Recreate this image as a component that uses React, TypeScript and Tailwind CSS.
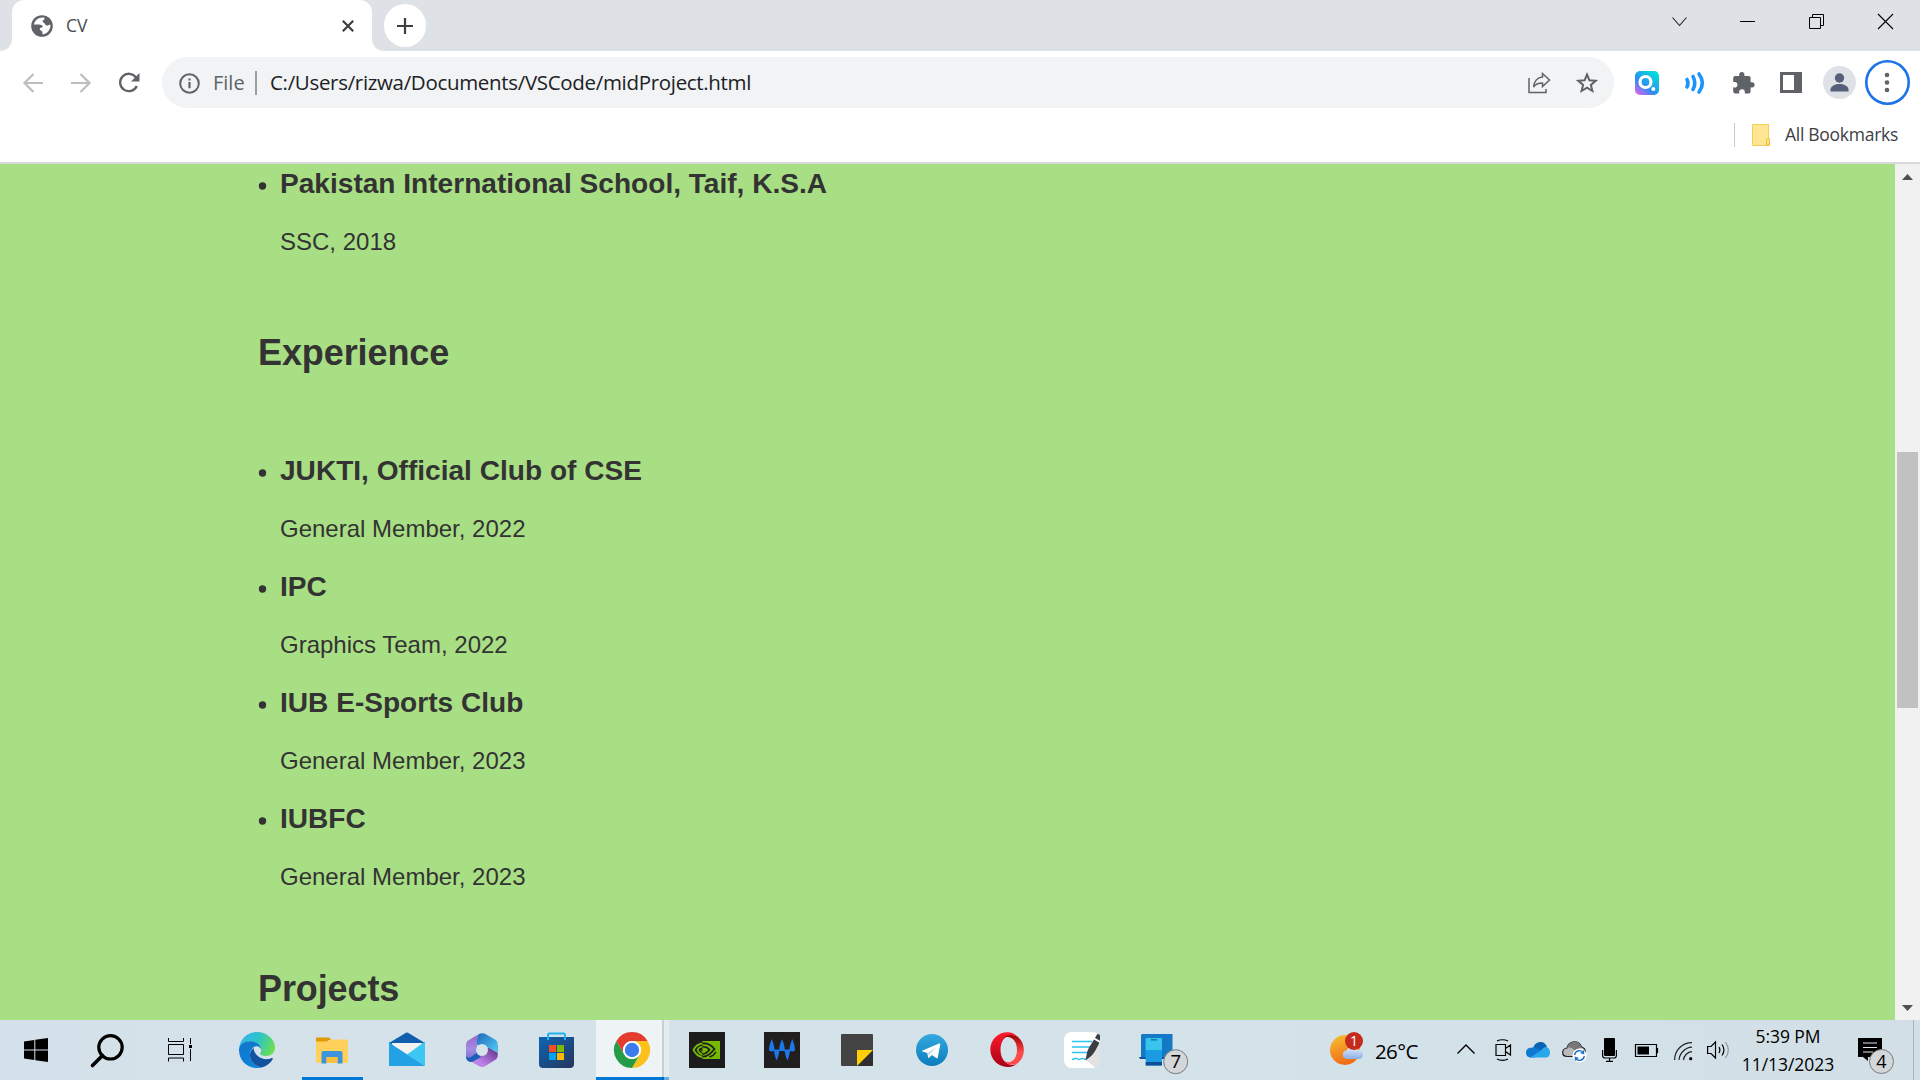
import type { ReactNode } from "react";

const UI = "font-['Open_Sans','Noto_Sans',sans-serif]";

function Svg({ w, h, className = "", children }: { w: number; h: number; className?: string; children: ReactNode }) {
  return (
    <svg width={w} height={h} viewBox={`0 0 ${w} ${h}`} fill="none" className={`block shrink-0 overflow-visible ${className}`}>
      {children}
    </svg>
  );
}

/* ---------- Browser chrome ---------- */

function TabStrip() {
  return (
    <div className="flex h-[51px] shrink-0 bg-[#dee1e6]">
      <Svg w={12} h={51}>
        <path d="M12 39v12H0C7 51 12 46 12 39z" fill="#fff" />
      </Svg>
      <div className="flex h-[51px] w-[360px] items-center rounded-t-[12px] bg-white pl-[19px]">
        <Svg w={22} h={22}>
          <circle cx="11" cy="11" r="10.8" fill="#5f6368" />
          <path d="M13.500 2.800c.2 1.300-.5 2.300-1.500 2.700-.9.400-.3 1.600.6 2 1.500.7 1.300 2.500 2.900 2.900 1.400.3 2.200-.9 4-.7.100 5-3.300 9-8 9.800-.3-1 .3-2-.3-3-.6-.9-2-.8-2.400-2-.3-1.200.9-1.800 2-2 1-.3 1.300-1.400.4-2.100-1.400-1-3.200-.9-4.700-.9-1.500 0-2.800-.2-3.600.3C3.500 5.500 8 1.700 13.500 2.800z" fill="#fff" />
        </Svg>
        <span className={`${UI} -mt-0.5 ml-[13px] w-[276px] text-[17.5px] leading-[24px] text-[#4a4d51]`}>CV</span>
        <Svg w={12} h={12}>
          <path d="M.8.8l10.400 10.400M11.200.8L.8 11.200" stroke="#3c4043" strokeWidth="2.200" />
        </Svg>
      </div>
      <Svg w={12} h={51}>
        <path d="M0 39v12h12C5 51 0 46 0 39z" fill="#fff" />
      </Svg>
      <div className="mt-1 flex h-[43px] w-[42px] items-center justify-center rounded-full bg-white">
        <Svg w={16} h={16}>
          <path d="M8 0v16M0 8h16" stroke="#3c4043" strokeWidth="2.200" />
        </Svg>
      </div>
      <div className="ml-auto flex items-start">
        <Svg w={15} h={10} className="mt-[17px]">
          <path d="M.5.5l7 8 7-8" stroke="#222" strokeWidth="1.100" />
        </Svg>
        <Svg w={15} h={1} className="mt-[21px] ml-[53px]">
          <rect width="15" height="1" fill="#000" />
        </Svg>
        <Svg w={15} h={15} className="mt-[14px] ml-[54px]">
          <path d="M.5 3.500h11v11H.5zM3.500 3.500v-3h11v11h-3" stroke="#000" />
        </Svg>
        <Svg w={15} h={15} className="mt-[14px] mr-[27px] ml-[54px]">
          <path d="M0 0l15 15M15 0L0 15" stroke="#000" strokeWidth="1.100" />
        </Svg>
      </div>
    </div>
  );
}

function Toolbar() {
  return (
    <div className="mt-1.5 flex h-[51px] shrink-0 items-center">
      <Svg w={20} h={20} className="ml-[23px]">
        <path d="M20 10H1.500M10.500 1L1.500 10l9 9" stroke="#bcbec1" strokeWidth="2.200" />
      </Svg>
      <Svg w={20} h={20} className="ml-[28px]">
        <path d="M0 10h18.500M9.500 1l9 9-9 9" stroke="#bcbec1" strokeWidth="2.200" />
      </Svg>
      <Svg w={22} h={20} className="ml-[28px]">
        <path d="M17 4.500A8.700 8.700 0 1 0 17.800 13" stroke="#5f6368" strokeWidth="2.300" />
        <path d="M20.500 0v8.500H12z" fill="#5f6368" />
      </Svg>
      <div className="ml-[21px] flex h-[51px] w-[1452px] items-center rounded-full bg-[#f1f3f4]">
        <Svg w={21} h={21} className="mt-0.5 ml-[17px]">
          <circle cx="10.500" cy="10.500" r="9.300" stroke="#5f6368" strokeWidth="2" />
          <path d="M10.500 9v6.200M10.500 5.600v2" stroke="#5f6368" strokeWidth="2.200" />
        </Svg>
        <span className={`${UI} ml-[13px] w-[42px] text-[20px] leading-[28px] tracking-[0px] text-[#5f6368]`}>File</span>
        <div className="h-6 w-0.5 bg-[#9a9da1]" />
        <span className={`${UI} -mt-0.5 ml-[13px] text-[20.5px] leading-[28px] tracking-[-0.32px] whitespace-nowrap text-[#202124]`}>
          C:/Users/rizwa/Documents/VSCode/midProject.html
        </span>
        <Svg w={23} h={22} className="mr-[25px] ml-auto">
          <path d="M1 6v14.500h17V17" stroke="#5f6368" strokeWidth="1.500" />
          <path d="M14.500 1.500l7 6.500-7 6.500V11c-4 0-7 1-9 4 .5-5 3.500-9.500 9-10z" stroke="#5f6368" strokeWidth="1.500" />
        </Svg>
        <Svg w={22} h={22} className="mr-4">
          <path d="M11 2.500l2.400 5.800 6.300.5-4.800 4.100 1.500 6.100L11 15.700 5.600 19l1.500-6.100-4.800-4.100 6.300-.5z" stroke="#5f6368" strokeWidth="2" />
        </Svg>
      </div>
      <Svg w={24} h={24} className="ml-[21px]">
        <defs>
          <linearGradient id="ext" x1="0" y1="1" x2=".8" y2="0">
            <stop stopColor="#ff5fe8" />
            <stop offset=".42" stopColor="#2d8cf5" />
            <stop offset="1" stopColor="#00e0d8" />
          </linearGradient>
        </defs>
        <rect width="24" height="24" rx="5" fill="url(#ext)" />
        <circle cx="10.500" cy="11" r="5.500" stroke="#fff" strokeWidth="3.200" />
        <circle cx="18.300" cy="18" r="2" fill="#fff" />
      </Svg>
      <Svg w={20} h={22} className="ml-[26px]">
        <path d="M2 7.500c1.300 2.500 1.300 5 0 7.500M8 4.500c2.200 4 2.200 9 0 13M14 2c4.500 6 4.500 12 0 18" stroke="#1a95ff" strokeWidth="3.600" strokeLinecap="round" />
      </Svg>
      <Svg w={22} h={22} className="ml-[28px]">
        <path d="M19 10.200h-1.400V6a2 2 0 0 0-2-2h-4.200V2.600a2.600 2.600 0 0 0-5.200 0V4H2.200a2 2 0 0 0-2 2v4h1.400a2.800 2.800 0 0 1 0 5.600H.2v4a2 2 0 0 0 2 2h4v-1.500a2.800 2.800 0 0 1 5.600 0v1.500h3.800a2 2 0 0 0 2-2v-4.200H19a2.600 2.600 0 0 0 0-5.200z" fill="#5f6368" />
      </Svg>
      <Svg w={22} h={21} className="ml-[25px]">
        <path d="M0 0h22v21H0zM3 3v15h11V3z" fill="#5f6368" fillRule="evenodd" />
      </Svg>
      <Svg w={33} h={33} className="ml-[21px]">
        <circle cx="16.500" cy="16.500" r="16.500" fill="#dee1e6" />
        <circle cx="16.500" cy="12" r="4.700" fill="#55617a" />
        <path d="M7.500 25.500v-2c0-3.500 5-5.500 9-5.500s9 2 9 5.500v2z" fill="#55617a" />
      </Svg>
      <Svg w={45} h={45} className="ml-[9px]">
        <circle cx="22.500" cy="22.500" r="21.200" stroke="#1a73e8" strokeWidth="2.600" />
        <circle cx="22" cy="15" r="2.300" fill="#5f6368" />
        <circle cx="22" cy="22.500" r="2.300" fill="#5f6368" />
        <circle cx="22" cy="30" r="2.300" fill="#5f6368" />
      </Svg>
    </div>
  );
}

function BookmarksBar() {
  return (
    <div className="flex h-[56px] shrink-0 justify-end border-b-2 border-[#d9dadc] pt-[15px]">
      <div className="flex h-6 items-center">
        <div className="h-6 w-px bg-[#c8cacd]" />
        <Svg w={18} h={22} className="ml-[17px]">
          <path d="M.5.5h16v14h1v7H.5z" fill="#ffe694" stroke="#f5cf52" />
          <path d="M14.500 21v-5.500c0-1.500 3-1.500 3 0V21z" fill="#ffe08a" stroke="#eec13c" />
        </Svg>
        <span className={`${UI} -mt-0.5 ml-[15px] w-[135px] text-[17.5px] leading-[24px] tracking-[-0.28px] whitespace-nowrap text-[#3c4043]`}>
          All Bookmarks
        </span>
      </div>
    </div>
  );
}

/* ---------- Page ---------- */

function Entry({ title, detail }: { title: string; detail: string }) {
  return (
    <li className="mb-[27px] h-[89px]">
      <div className="flex h-8 items-center">
        <Svg w={22} h={8} className="mt-[5px]">
          <circle cx="4.500" cy="4" r="3.700" fill="#333" />
        </Svg>
        <h3 className="mt-0.5 text-[28.08px] leading-8 font-bold whitespace-nowrap">{title}</h3>
      </div>
      <p className="mt-[29px] ml-[22px] text-[24px] leading-7">{detail}</p>
    </li>
  );
}

const experience = [
  { title: "JUKTI, Official Club of CSE", detail: "General Member, 2022" },
  { title: "IPC", detail: "Graphics Team, 2022" },
  { title: "IUB E-Sports Club", detail: "General Member, 2023" },
  { title: "IUBFC", detail: "General Member, 2023" },
];

function Page() {
  return (
    <div className="flex h-[856px] shrink-0 overflow-hidden bg-[#a9df84]">
      <main className="flex-1 pt-[3px] pl-[258px] font-['Liberation_Sans',Arial,sans-serif] text-[#333]">
        <ul>
          <Entry title="Pakistan International School, Taif, K.S.A" detail="SSC, 2018" />
        </ul>
        <h2 className="mt-[77px] text-[36px] leading-10 font-bold tracking-[-0.1px]">Experience</h2>
        <ul className="mt-[81px]">
          {experience.map((e) => (
            <Entry key={e.title} {...e} />
          ))}
        </ul>
        <h2 className="mt-[78px] text-[36px] leading-10 font-bold tracking-[-0.1px]">Projects</h2>
      </main>
      <div className="flex w-[25px] flex-col items-center bg-[#f1f1f1]">
        <Svg w={11} h={6} className="mt-[10px]">
          <path d="M5.500 0L11 6H0z" fill="#505050" />
        </Svg>
        <div className="mt-[272px] h-[256px] w-[21px] bg-[#c1c1c1]" />
        <Svg w={11} h={6} className="mt-auto mb-[9px]">
          <path d="M5.500 6L11 0H0z" fill="#505050" />
        </Svg>
      </div>
    </div>
  );
}

/* ---------- Taskbar ---------- */

const Edge = () => (
  <Svg w={36} h={36}>
    <defs>
      <linearGradient id="e1" x1="0" y1=".3" x2="1" y2=".6">
        <stop stopColor="#35b5ea" />
        <stop offset=".5" stopColor="#2fc3c9" />
        <stop offset="1" stopColor="#6be04f" />
      </linearGradient>
      <linearGradient id="e2" x1="0" y1="0" x2=".6" y2="1">
        <stop stopColor="#1273c6" />
        <stop offset="1" stopColor="#0a86e0" />
      </linearGradient>
    </defs>
    <path d="M0 17C.8 7 8.500 0 18 0c10 0 18 7.500 18 15.500 0 5.500-4 8.500-8.800 8.500-4 0-6.200-1.200-6.200-2.200 0-.8 1.200-1.600 1.200-4 0-4.500-4.500-8.300-10.700-8.300C6.500 9.500 2 12 0 17z" fill="url(#e1)" />
    <path d="M0 17C1 12 6 9.300 11.500 9.300c6.500 0 10.700 4 10.700 8.500-.8-2.300-2.400-3.600-4.500-3.600-3.500 0-6.700 4-6.700 8.800 0 6.500 5.500 12.500 12.500 12.300C21 36 19.500 36 18 36 7.500 36 0 28 0 18z" fill="url(#e2)" />
    <path d="M14.500 16c-2 1.500-3.500 4-3.500 7 0 7 6 12.500 12.500 12.300 4.500-1.500 8.300-4.500 10.300-8.300.4-.8-.3-1.300-1-1-1.500.8-3.500 1.200-5.300 1.200-6.500 0-12-3.800-13-11.200z" fill="#10529f" />
  </Svg>
);

const Explorer = () => (
  <Svg w={36} h={36}>
    <path d="M2 5.500h13l2.500 2.800h-3L12 11H2z" fill="#dd9b00" />
    <path d="M2 9.500h12L17 7.500h16a1 1 0 0 1 1 1V29a2 2 0 0 1-2 2H4a2 2 0 0 1-2-2z" fill="#ffd05a" />
    <path d="M7.500 31.500V21a2 2 0 0 1 2-2h17a2 2 0 0 1 2 2v10.500h-5V25h-11v6.500z" fill="#3d94dc" />
    <path d="M12.500 25h11v5.500h-11z" fill="#f8bf3c" />
  </Svg>
);

const Mail = () => (
  <Svg w={36} h={36}>
    <path d="M0 11L17 .8a2 2 0 0 1 2 0L36 11v5H0z" fill="#0f5fae" />
    <path d="M3 11h30v10L18 24 3 21z" fill="#f4f3f4" />
    <path d="M36 9.500V34L18 22.500z" fill="#3cc8f2" />
    <path d="M0 9.500v24.500h36L4.500 13.500z" fill="#22a2e4" />
  </Svg>
);

const M365 = () => (
  <Svg w={36} h={36}>
    <defs>
      <linearGradient id="m1" x1="0" y1="0" x2="0" y2="1">
        <stop stopColor="#9a62c8" />
        <stop offset=".55" stopColor="#a48ce0" />
        <stop offset="1" stopColor="#7a6cd0" />
      </linearGradient>
      <linearGradient id="m2" x1="0" y1="0" x2="1" y2="1">
        <stop stopColor="#1f67bd" />
        <stop offset="1" stopColor="#54d0f7" />
      </linearGradient>
      <linearGradient id="m3" x1="1" y1="0" x2="0" y2="1">
        <stop offset=".1" stopColor="#663088" />
        <stop offset=".7" stopColor="#bd83ea" />
      </linearGradient>
    </defs>
    <path d="M15 2L5 8a5 5 0 0 0-3 4v12c0 3 2 5 4.500 5L13 25V9c0-3 .5-5 2-7z" fill="url(#m1)" />
    <path d="M23 16L33.700 13v10c0 2-.7 4-2.700 5l-9.500 6c-2 1.200-4.500 1.200-6.500 0L5 28.500l3-.5 15-9z" fill="url(#m3)" />
    <path d="M15 2c2-1 4.500-1 6.500 0L31 7.500c2 1 2.700 3 2.700 5V21L23 15l-10-2V9c0-3 .5-5 2-7z" fill="url(#m2)" />
    <path d="M2 24c1 1.500 3 2 5 1l6-4.500 4 4.500-8 4.500C5 31 2 28.500 2 24z" fill="#1c5fb9" />
    <circle cx="18" cy="18" r="6" fill="#d6e4ea" />
  </Svg>
);

const Store = () => (
  <Svg w={36} h={36}>
    <defs>
      <linearGradient id="s1" x1="0" y1="0" x2="1" y2="1">
        <stop stopColor="#0e66b4" />
        <stop offset="1" stopColor="#26345c" />
      </linearGradient>
    </defs>
    <path d="M1 5h34v27a4 4 0 0 1-4 4H4a4 4 0 0 1-4-4V5z" fill="url(#s1)" />
    <path d="M9 8V3a1.500 1.500 0 0 1 1.500-1.500h14A1.500 1.500 0 0 1 26 3v5" stroke="#1fb4f0" strokeWidth="2" />
    <path d="M10 13h7v7h-7z" fill="#f25022" />
    <path d="M18 13h7v7h-7z" fill="#7fba00" />
    <path d="M10 21h7v7h-7z" fill="#00a4ef" />
    <path d="M18 21h7v7h-7z" fill="#ffb900" />
  </Svg>
);

const Chrome = () => (
  <Svg w={36} h={36}>
    <path d="M2.400 9A18 18 0 0 1 33.600 9H18a9 9 0 0 0-7.800 13.500z" fill="#e33b2e" />
    <path d="M33.600 9A18 18 0 0 1 18 36l7.800-13.500A9 9 0 0 0 18 9z" fill="#fcc21b" />
    <path d="M18 36A18 18 0 0 1 2.400 9l7.800 13.500a9 9 0 0 0 15.600 0z" fill="#259b48" />
    <circle cx="18" cy="18" r="9" fill="#fff" />
    <circle cx="18" cy="18" r="7.200" fill="#3a7cec" />
  </Svg>
);

const Nvidia = () => (
  <Svg w={36} h={36}>
    <path d="M0 0h36v36H0z" fill="#1c1c1c" />
    <path d="M13.500 9H31v18H13.500z" fill="#76b900" />
    <path d="M13.500 11.500C9 12 6 15 4.500 18c2 4 5 6.500 9 7" stroke="#76b900" strokeWidth="1.800" />
    <path d="M13.500 14.500c-3 .3-4.500 2-5 3.500 1 2.500 2.500 4 5 4.500" stroke="#76b900" strokeWidth="1.600" />
    <path d="M13.500 11.500c6-.5 9.500 2.500 12 5.500-3.500 4.500-7 8-12 7.500M13.500 14.800c4-.3 6 1.500 7 3-2 2.500-4 4.300-7 4.300" stroke="#1c1c1c" strokeWidth="1.700" />
    <path d="M27 20l-3 3.500-3.500 1.500" stroke="#1c1c1c" strokeWidth="1.500" />
    <path d="M13.500 17c1.500 0 2 .5 2.500 1.200-.7 1-1.500 1.700-2.500 1.700-1-.3-1.500-.8-1.800-1.500" stroke="#76b900" strokeWidth="1" />
  </Svg>
);

const Wave = () => (
  <Svg w={36} h={36}>
    <path d="M0 0h36v36H0z" fill="#201e1e" />
    <path
      d="M7.700 7c1.500 3.500 2.600 7 2.800 10.500h4.700C15.400 14 16.500 10.500 18 7c1.500 3.500 2.600 7 2.800 10.500h4.700c.2-3.500 1.300-7 2.800-10.500 1.500 3.500 2.600 7 2.700 11.500-1.500 1.200-3.500 1.200-5 .5-.5 3.500-1.300 6.500-2.600 9.500-1.400-3-2.300-6-2.700-9.500h-5.400c-.4 3.500-1.300 6.500-2.700 9.500-1.300-3-2.100-6-2.600-9.500-1.500.7-3.500.7-5-.5C5 14 6.200 10.500 7.700 7z"
      fill="#1c78ea"
    />
  </Svg>
);

const Sticky = () => (
  <Svg w={36} h={36}>
    <path d="M3 2h30a1 1 0 0 1 1 1v30a1 1 0 0 1-1 1H3a1 1 0 0 1-1-1V3a1 1 0 0 1 1-1z" fill="#434343" />
    <path d="M34 18L18 34h15a1 1 0 0 0 1-1z" fill="#2f2f2f" />
    <path d="M18 18h16L18 34z" fill="#ffd000" />
  </Svg>
);

const Telegram = () => (
  <Svg w={36} h={36}>
    <defs>
      <linearGradient id="t1" x1="0" y1="0" x2="0" y2="1">
        <stop stopColor="#34a9de" />
        <stop offset="1" stopColor="#0b7dbd" />
      </linearGradient>
    </defs>
    <circle cx="18" cy="18" r="16" fill="url(#t1)" />
    <path d="M8.500 18.500L25 11.500c.9-.3 1.400.1 1.200 1L23.800 25.500c-.2.900-.8 1.100-1.600.6L18 23l-2.600 2.600c-.8.700-1.300.4-1.400-.5L13.300 21l-4.700-1.400c-.8-.3-.8-.8-.1-1.100z" fill="#fff" />
    <path d="M14 21l8.500-6.200-6.800 7.200-.4 3z" fill="#b9d6e8" />
  </Svg>
);

const Opera = () => (
  <Svg w={36} h={36} className="ml-0.5">
    <defs>
      <linearGradient id="o1" x1="0" y1="0" x2="0" y2="1">
        <stop stopColor="#ff1b2d" />
        <stop offset="1" stopColor="#a70014" />
      </linearGradient>
      <linearGradient id="o2" x1="0" y1="0" x2="0" y2="1">
        <stop stopColor="#9c0000" />
        <stop offset=".6" stopColor="#ff4b4b" />
      </linearGradient>
    </defs>
    <path d="M17.500.3C8 .3.300 8 .300 17.600S8 35 17.500 35C22 35 25 33.500 28 31c-2 1.500-4 2-6 2-7-1-11.500-7-11.500-15.300S15 3.500 21 3c3 0 5 1 7 2C25 2 22 .3 17.500.3z" fill="url(#o1)" />
    <path d="M12.500 6.500C15 4 18 2.500 21.500 3c2.500 0 4.800 1 6.500 2a17.300 17.300 0 0 1 0 26c-5 3-11 2-15-3 7 5.500 14 0 14-10.300S19.500 2 12.500 6.500z" fill="url(#o2)" />
  </Svg>
);

const Notes = () => (
  <Svg w={36} h={36}>
    <rect width="36" height="36" rx="7.500" fill="#fff" />
    <path d="M22 28l13-17 1 2v16a7 7 0 0 1-5 6.500z" fill="#e2e2e2" />
    <path d="M8 9.500h20M8 15h18M8 20.500h16" stroke="#2cc3ee" strokeWidth="1.500" />
    <path d="M8 27.500c2 0 3-2 4.500-1s2.500 1.500 4 .5 2.500-.5 5.500.5" stroke="#2cc3ee" strokeWidth="1.500" />
    <path d="M21.500 28.500l1.500-8c.5-2 1.500-4 3-6.500l4-6.500 5.500 3.200-4 7.500c-1.200 2.200-2.500 4-4 5.500z" fill="#3c3e42" />
    <path d="M31 6l1.800-3.300c1-1.300 3.200-.3 3.200 1.300v4.800z" fill="#3c3e42" />
  </Svg>
);

const Phone = () => (
  <Svg w={36} h={36}>
    <path d="M3 2h30.500v23H2V3z" fill="#147ac8" />
    <path d="M0 25h26v2H1z" fill="#0b529c" />
    <rect x="6.700" y="6" width="16.300" height="27.500" rx="1" fill="#1a9be2" />
    <path d="M6.700 7a1 1 0 0 1 1-1H22a1 1 0 0 1 1 1v11H6.700z" fill="#39c4ee" />
    <path d="M6.700 30h16.300v3.500H6.700z" fill="#0d4f96" />
    <path d="M12 7.800h6" stroke="#1577b5" strokeWidth="1.500" />
    <circle cx="36.700" cy="29.700" r="12" fill="#d3d7da" stroke="#777b7e" />
    <text x="36.700" y="36.300" textAnchor="middle" fontSize="18.500" fill="#000" fontFamily="Open Sans">7</text>
  </Svg>
);

function Slot({ children }: { children: ReactNode }) {
  return <div className="flex h-[60px] w-[75px] shrink-0 items-center justify-center">{children}</div>;
}

function Tray() {
  return (
    <div className="flex h-[60px] items-start">
      <Svg w={33} h={33} className="mt-3">
        <defs>
          <linearGradient id="w1" x1=".2" y1="0" x2=".5" y2="1">
            <stop stopColor="#f5bd33" />
            <stop offset="1" stopColor="#f06a13" />
          </linearGradient>
          <linearGradient id="w2" x1="0" y1="0" x2="0" y2="1">
            <stop stopColor="#e3edfb" />
            <stop offset="1" stopColor="#8aaee6" />
          </linearGradient>
        </defs>
        <circle cx="15" cy="18" r="15" fill="url(#w1)" />
        <path d="M16.500 27a4.300 4.300 0 0 1 0-8.500 6.500 6.500 0 0 1 11-1c3 0 5.500 2 5.500 5s-2 4.500-4.500 4.500z" fill="url(#w2)" />
        <circle cx="24" cy="9" r="9" fill="#c42b1c" />
        <text x="24" y="14" textAnchor="middle" fontSize="14" fill="#fff" fontFamily="Open Sans">1</text>
      </Svg>
      <span className={`${UI} mt-4 ml-3 w-[82px] text-[20.5px] leading-[30px] tracking-[-0.6px] whitespace-nowrap text-black`}>26°C</span>
      <Svg w={18} h={10} className="mt-6">
        <path d="M.5 9.500L9 1l8.500 8.500" stroke="#000" strokeWidth="1.400" />
      </Svg>
      <Svg w={17} h={22} className="mt-[19px] ml-5">
        <path d="M1 5.500h9.500v11H1zM10.500 9.500l5-3.500v10l-5-3.500M2 2c3-1.700 8-1.700 11 0M2 20c3 1.700 8 1.700 11 0" stroke="#000" strokeWidth="1.200" />
      </Svg>
      <Svg w={24} h={16} className="mt-[22px] ml-[14px]">
        <path d="M7 7C8 2 11 0 14.500 0 18 0 20 2 21 5l-5 5z" fill="#0863b5" />
        <path d="M5 15.500C1.500 15.500 0 13 0 10.700c0-2.700 2-5 5-5C8 4.500 11 5.500 13 7.500l4 2-8 6z" fill="#0f78d4" />
        <path d="M4 15.500L15 8.500c1-1.800 3-3.500 5.500-3.500 2.500 1 3.500 3 3.500 5.500 0 3-1.500 5-4.500 5z" fill="#28a8ea" />
      </Svg>
      <Svg w={24} h={21} className="mt-[21px] ml-3">
        <path d="M5 15.500C2 15.500.7 13.500.7 11.500c0-2.200 1.800-4.300 4.300-4.500C6 3 9 .8 12.500.8S18.500 3 19.500 6c2.500.5 3.800 2.500 3.800 5l-5 4.500z" fill="#b9b9b9" stroke="#222" strokeWidth="1.200" />
        <path d="M5 7c3-1 5 0 8 2.500L19.500 6C18 2.500 16 .8 12.500.8S6 3 5 7z" fill="#777" />
        <circle cx="17.500" cy="14.500" r="7" fill="#fff" />
        <path d="M12.700 14a4.800 4.800 0 0 1 8.800-2.200v-2.300M22.300 15a4.800 4.800 0 0 1-8.800 2.200v2.300M21.500 12h-2.800M13.500 17h2.800" stroke="#1a6fc4" strokeWidth="1.400" />
      </Svg>
      <Svg w={15} h={24} className="mt-[18px] ml-4">
        <rect x="2" width="11" height="18" rx="1" fill="#000" />
        <path d="M.6 12v5.500c0 1.500 1 2.500 2.500 2.500h8.800c1.500 0 2.500-1 2.500-2.500V12M7.500 20v3M4 23.300h7" stroke="#000" strokeWidth="1.200" />
      </Svg>
      <Svg w={23} h={13} className="mt-6 ml-[18px]">
        <path d="M.5.5h21v12H.5zM22.500 4v5" stroke="#000" strokeWidth="1.200" />
        <path d="M2.500 2.500h11.500v8H2.500z" fill="#000" />
      </Svg>
      <Svg w={19} h={19} className="mt-[22px] ml-4">
        <path d="M.6 18C.6 8.500 8 .6 18 .6M5 18C5.500 11.500 11 5.500 18 5.200M9.500 18c.5-4.500 4-8 8.500-8.300" stroke="#222" strokeWidth="1.200" />
        <circle cx="16.700" cy="16.700" r="1.600" fill="#000" />
      </Svg>
      <Svg w={22} h={18} className="mt-[21px] ml-[14px]">
        <path d="M.6 5.500H4L8.500 1v16L4 12.500H.6z" stroke="#000" strokeWidth="1.200" />
        <path d="M12 6c1.200 2 1.200 4 0 6M15 3.500c2.500 3.500 2.500 7.500 0 11" stroke="#000" strokeWidth="1.200" />
        <path d="M18.500 1c3.500 5 3.500 11 0 16" stroke="#8d979d" strokeWidth="1.200" />
      </Svg>
      <div className={`${UI} mt-0.5 ml-[10px] w-[98px] text-center text-[17.5px] leading-[28px] tracking-[-0.05px] whitespace-nowrap text-black`}>
        <div>5:39 PM</div>
        <div>11/13/2023</div>
      </div>
      <Svg w={36} h={36} className="mt-[18px] ml-[21px]">
        <path d="M0 0h24v19H10v4l-5-4H0z" fill="#000" />
        <path d="M5 5h14M5 9.500h14M5 14h10" stroke="#dfe6ea" strokeWidth="1.200" />
        <circle cx="23.500" cy="23.500" r="12" fill="#d3d7da" stroke="#777b7e" />
        <text x="23.500" y="30" textAnchor="middle" fontSize="18" fontWeight="500" fill="#000" fontFamily="Open Sans">4</text>
      </Svg>
      <div className="mr-[6px] ml-[19px] h-[60px] w-px bg-[#aab4ba]" />
    </div>
  );
}

function Taskbar() {
  return (
    <div className="flex h-[60px] shrink-0 items-center justify-between bg-linear-to-r from-[#d5e1ea] via-[#d4e3e9] to-[#d2dfe7]">
      <div className="flex h-[60px] items-center">
        <Svg w={24} h={24} className="ml-6">
          <path d="M0 3.400L10.300 2v9.500H0zM11.300 1.800L24 0v11.500H11.300zM0 12.500h10.300V22L0 20.600zM11.300 12.500H24V24l-12.700-1.800z" fill="#000" />
        </Svg>
        <Svg w={33} h={33} className="ml-[43px]">
          <circle cx="19.500" cy="13.300" r="11.700" stroke="#000" strokeWidth="3.200" />
          <path d="M11.500 21.500L1.500 31.500" stroke="#000" strokeWidth="3.600" strokeLinecap="round" />
        </Svg>
        <Svg w={24} h={24} className="mr-[27px] ml-[44px]">
          <path d="M.5 0v3.500h15V0M.5 6.500h15v10H.5zM.5 23.500v-3.500h15v3.500M22.500 0v6M22.500 11v12" stroke="#000" />
          <path d="M21 7h3v3h-3z" fill="#000" />
        </Svg>
        <Slot><Edge /></Slot>
        <div className="flex h-[60px] w-[75px] flex-col items-center pt-3">
          <Explorer />
          <div className="mt-auto ml-px h-[3px] w-[61px] bg-[#0078d7]" />
        </div>
        <Slot><Mail /></Slot>
        <Slot><M365 /></Slot>
        <Slot><Store /></Slot>
        <div className="flex h-[60px] w-[75px]">
          <div className="ml-[2px] flex h-[60px] w-[66px] flex-col items-center border-b-[3px] border-[#0078d7] bg-[#eef3f6] pt-3 pl-1.5">
            <Chrome />
          </div>
          <div className="h-[60px] w-[2px] border-b-[3px] border-[#006ac0] bg-[#c4d1d9]" />
          <div className="h-[60px] w-[5px] border-b-[3px] border-[#66ade8] bg-[#e4ecf0]" />
        </div>
        <Slot><Nvidia /></Slot>
        <Slot><Wave /></Slot>
        <Slot><Sticky /></Slot>
        <Slot><Telegram /></Slot>
        <Slot><Opera /></Slot>
        <Slot><Notes /></Slot>
        <Slot><Phone /></Slot>
      </div>
      <Tray />
    </div>
  );
}

export default function App() {
  return (
    <div className="flex h-[1080px] w-[1920px] flex-col overflow-hidden bg-white">
      <TabStrip />
      <Toolbar />
      <BookmarksBar />
      <Page />
      <Taskbar />
    </div>
  );
}
